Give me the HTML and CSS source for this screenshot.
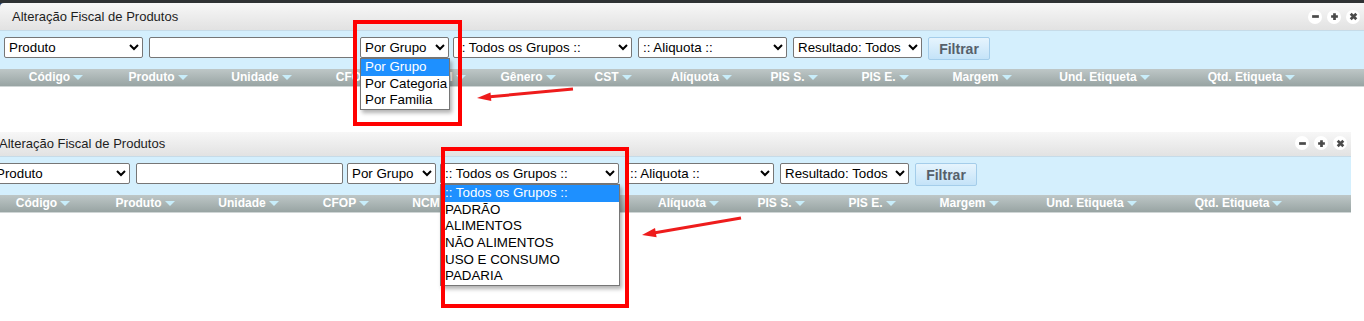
FILE: index.html
```html
<!DOCTYPE html>
<html lang="pt-BR">
<head>
    <meta charset="UTF-8">
    <title>Alteração Fiscal de Produtos</title>
    <link rel="stylesheet" href="styles.css">
</head>
<body>
<div class="shot">
    <div class="top-strip"></div>

    <!-- primeira captura: combo "Por Grupo" aberto -->
    <div class="panel panel-first">
        <div class="titlebar">
            <span class="title">Alteração Fiscal de Produtos</span>
            <div class="win-buttons">
                <span class="win-btn"><svg width="9" height="9" viewBox="0 0 8 8"><path d="M1 4H7" /></svg></span>
                <span class="win-btn"><svg width="9" height="9" viewBox="0 0 8 8"><path d="M1 4H7M4 1V7" /></svg></span>
                <span class="win-btn"><svg width="9" height="9" viewBox="0 0 8 8"><path d="M1.5 1.5L6.5 6.5M6.5 1.5L1.5 6.5" /></svg></span>
            </div>
        </div>
        <div class="toolbar">
            <select class="sel sel-campo"><option>Produto</option></select>
            <input class="busca" type="text">
            <span class="drop drop-tipo">
                <select class="sel sel-tipo"><option>Por Grupo</option></select>
                <div class="listbox">
                    <div class="opt selected">Por Grupo</div>
                    <div class="opt">Por Categoria</div>
                    <div class="opt">Por Familia</div>
                </div>
            </span>
            <span class="drop drop-grupo">
                <select class="sel sel-grupo"><option>:: Todos os Grupos ::</option></select>
            </span>
            <select class="sel sel-aliq"><option>:: Aliquota ::</option></select>
            <select class="sel sel-result"><option>Resultado: Todos</option></select>
            <button class="btn-filtrar">Filtrar</button>
        </div>
        <div class="grid-head">
            <div class="col">Código<i class="caret"></i></div>
            <div class="col">Produto<i class="caret"></i></div>
            <div class="col">Unidade<i class="caret"></i></div>
            <div class="col">CFOP<i class="caret"></i></div>
            <div class="col">NCM<i class="caret"></i></div>
            <div class="col">Gênero<i class="caret"></i></div>
            <div class="col">CST<i class="caret"></i></div>
            <div class="col">Alíquota<i class="caret"></i></div>
            <div class="col">PIS S.<i class="caret"></i></div>
            <div class="col">PIS E.<i class="caret"></i></div>
            <div class="col">Margem<i class="caret"></i></div>
            <div class="col">Und. Etiqueta<i class="caret"></i></div>
            <div class="col">Qtd. Etiqueta<i class="caret"></i></div>
        </div>
    </div>

    <!-- segunda captura: combo de grupos aberto -->
    <div class="panel panel-second">
        <div class="titlebar">
            <span class="title">Alteração Fiscal de Produtos</span>
            <div class="win-buttons">
                <span class="win-btn"><svg width="9" height="9" viewBox="0 0 8 8"><path d="M1 4H7" /></svg></span>
                <span class="win-btn"><svg width="9" height="9" viewBox="0 0 8 8"><path d="M1 4H7M4 1V7" /></svg></span>
                <span class="win-btn"><svg width="9" height="9" viewBox="0 0 8 8"><path d="M1.5 1.5L6.5 6.5M6.5 1.5L1.5 6.5" /></svg></span>
            </div>
        </div>
        <div class="toolbar">
            <select class="sel sel-campo"><option>Produto</option></select>
            <input class="busca" type="text">
            <span class="drop drop-tipo">
                <select class="sel sel-tipo"><option>Por Grupo</option></select>
            </span>
            <span class="drop drop-grupo">
                <select class="sel sel-grupo"><option>:: Todos os Grupos ::</option></select>
                <div class="listbox">
                    <div class="opt selected">:: Todos os Grupos ::</div>
                    <div class="opt">PADRÃO</div>
                    <div class="opt">ALIMENTOS</div>
                    <div class="opt">NÃO ALIMENTOS</div>
                    <div class="opt">USO E CONSUMO</div>
                    <div class="opt">PADARIA</div>
                </div>
            </span>
            <select class="sel sel-aliq"><option>:: Aliquota ::</option></select>
            <select class="sel sel-result"><option>Resultado: Todos</option></select>
            <button class="btn-filtrar">Filtrar</button>
        </div>
        <div class="grid-head">
            <div class="col">Código<i class="caret"></i></div>
            <div class="col">Produto<i class="caret"></i></div>
            <div class="col">Unidade<i class="caret"></i></div>
            <div class="col">CFOP<i class="caret"></i></div>
            <div class="col">NCM<i class="caret"></i></div>
            <div class="col">Gênero<i class="caret"></i></div>
            <div class="col">CST<i class="caret"></i></div>
            <div class="col">Alíquota<i class="caret"></i></div>
            <div class="col">PIS S.<i class="caret"></i></div>
            <div class="col">PIS E.<i class="caret"></i></div>
            <div class="col">Margem<i class="caret"></i></div>
            <div class="col">Und. Etiqueta<i class="caret"></i></div>
            <div class="col">Qtd. Etiqueta<i class="caret"></i></div>
        </div>
    </div>

    <!-- marcações em vermelho -->
    <div class="mark mark-1"></div>
    <div class="mark mark-2"></div>
    <svg class="arrows" width="1364" height="321" viewBox="0 0 1364 321">
        <line x1="573" y1="89" x2="490" y2="96.8" />
        <polygon points="477,98 491.3,101 490.5,92.6" />
        <line x1="741" y1="218" x2="655" y2="232.7" />
        <polygon points="642,235 656.6,237.2 655,228" />
    </svg>
</div>
</body>
</html>
```

FILE: styles.css
```css
body {
    margin: 0;
    background: #fff;
    font-family: "Liberation Sans", Arial, sans-serif;
}
.shot {
    position: relative;
    width: 1364px;
    height: 321px;
    overflow: hidden;
    background: #fff;
}
.top-strip {
    height: 3px;
    background: #2f3234;
}
.panel {
    width: 1364px;
}
.panel-first {
    background: linear-gradient(#1f3a66 0, #1f3a66 10px, transparent 10px);
}
.panel-second {
    margin-left: -13px;
    margin-top: 45px;
}
.titlebar {
    box-sizing: border-box;
    height: 28px;
    display: flex;
    align-items: center;
    justify-content: space-between;
    padding: 0 4px 0 12px;
    background: linear-gradient(#f7f7f7, #e2e2e2);
    border-bottom: 1px solid #c6dbe8;
    border-top-left-radius: 4px;
}
.panel-second .titlebar {
    height: 25px;
    border-top-left-radius: 0;
}
.title {
    font-size: 13px;
    line-height: 26px;
    color: #1e1e1e;
}
.panel-second .title {
    line-height: 20px;
}
.win-buttons {
    display: flex;
    gap: 5px;
}
.panel-second .win-buttons {
    margin-top: -2px;
}
.win-btn {
    width: 14px;
    height: 14px;
    border-radius: 50%;
    background: #fff;
    display: flex;
    align-items: center;
    justify-content: center;
}
.win-btn path {
    stroke: #4a4a4a;
    stroke-width: 2.4;
    fill: none;
}
.toolbar {
    box-sizing: border-box;
    height: 38px;
    display: flex;
    align-items: flex-start;
    padding: 6px 0 0 4px;
    background: #d4effd;
}
.sel, .busca {
    box-sizing: border-box;
    height: 21px;
    margin: 0;
    font-family: "Liberation Sans", Arial, sans-serif;
    font-size: 13.333px;
    color: #000;
    background: #fff;
    border: 1px solid #767676;
    border-radius: 2px;
}
.drop {
    position: relative;
    display: block;
}
.sel-campo { width: 139px; }
.busca { width: 207px; margin-left: 6px; }
.drop-tipo { margin-left: 4px; }
.sel-tipo { width: 89px; }
.drop-grupo { margin-left: 4px; }
.sel-grupo { width: 179px; }
.sel-aliq { width: 149px; margin-left: 6px; }
.sel-result { width: 129px; margin-left: 6px; }
.btn-filtrar {
    box-sizing: border-box;
    width: 62px;
    height: 23px;
    margin-left: 6px;
    padding: 0;
    font-family: "Liberation Sans", Arial, sans-serif;
    font-size: 14px;
    font-weight: bold;
    color: #56606a;
    background: linear-gradient(#e6f4fd, #c4e3f8);
    border: 1px solid #a4cdea;
    border-radius: 2px;
}
.listbox {
    position: absolute;
    top: 100%;
    left: 0;
    right: -1px;
    z-index: 5;
    background: #fff;
    border: 1px solid #767676;
    box-shadow: 2px 3px 4px rgba(0, 0, 0, 0.3);
    font-size: 13.333px;
    color: #000;
}
.opt {
    height: 16.7px;
    line-height: 16.7px;
    padding-left: 4px;
    white-space: nowrap;
}
.opt.selected {
    background: #1e90ff;
    color: #fff;
}
.grid-head {
    box-sizing: border-box;
    height: 18px;
    display: grid;
    grid-template-columns: 100px 104px 103px 92px 81px 84px 86px 91px 94px 88px 106px 139px 155px;
    padding-left: 6px;
    background: linear-gradient(#bec7c7, #98a4a3);
    border-bottom: 1px solid #d0d6d6;
}
.panel-first .grid-head {
    margin-bottom: 0;
}
.col {
    text-align: center;
    font-size: 12px;
    font-weight: bold;
    line-height: 16px;
    color: #fff;
    white-space: nowrap;
}
.caret {
    display: inline-block;
    width: 0;
    height: 0;
    margin-left: 3px;
    vertical-align: middle;
    border-left: 5px solid transparent;
    border-right: 5px solid transparent;
    border-top: 5px solid #c8edfa;
}
.mark {
    position: absolute;
    box-sizing: border-box;
    border: 4px solid #f00;
    z-index: 10;
}
.mark-1 {
    left: 353px;
    top: 20px;
    width: 109px;
    height: 106px;
}
.mark-2 {
    left: 441px;
    top: 147px;
    width: 188px;
    height: 161px;
}
.arrows {
    position: absolute;
    left: 0;
    top: 0;
    z-index: 11;
}
.arrows line {
    stroke: #ee1c1c;
    stroke-width: 3;
}
.arrows polygon {
    fill: #ee1c1c;
}
```
